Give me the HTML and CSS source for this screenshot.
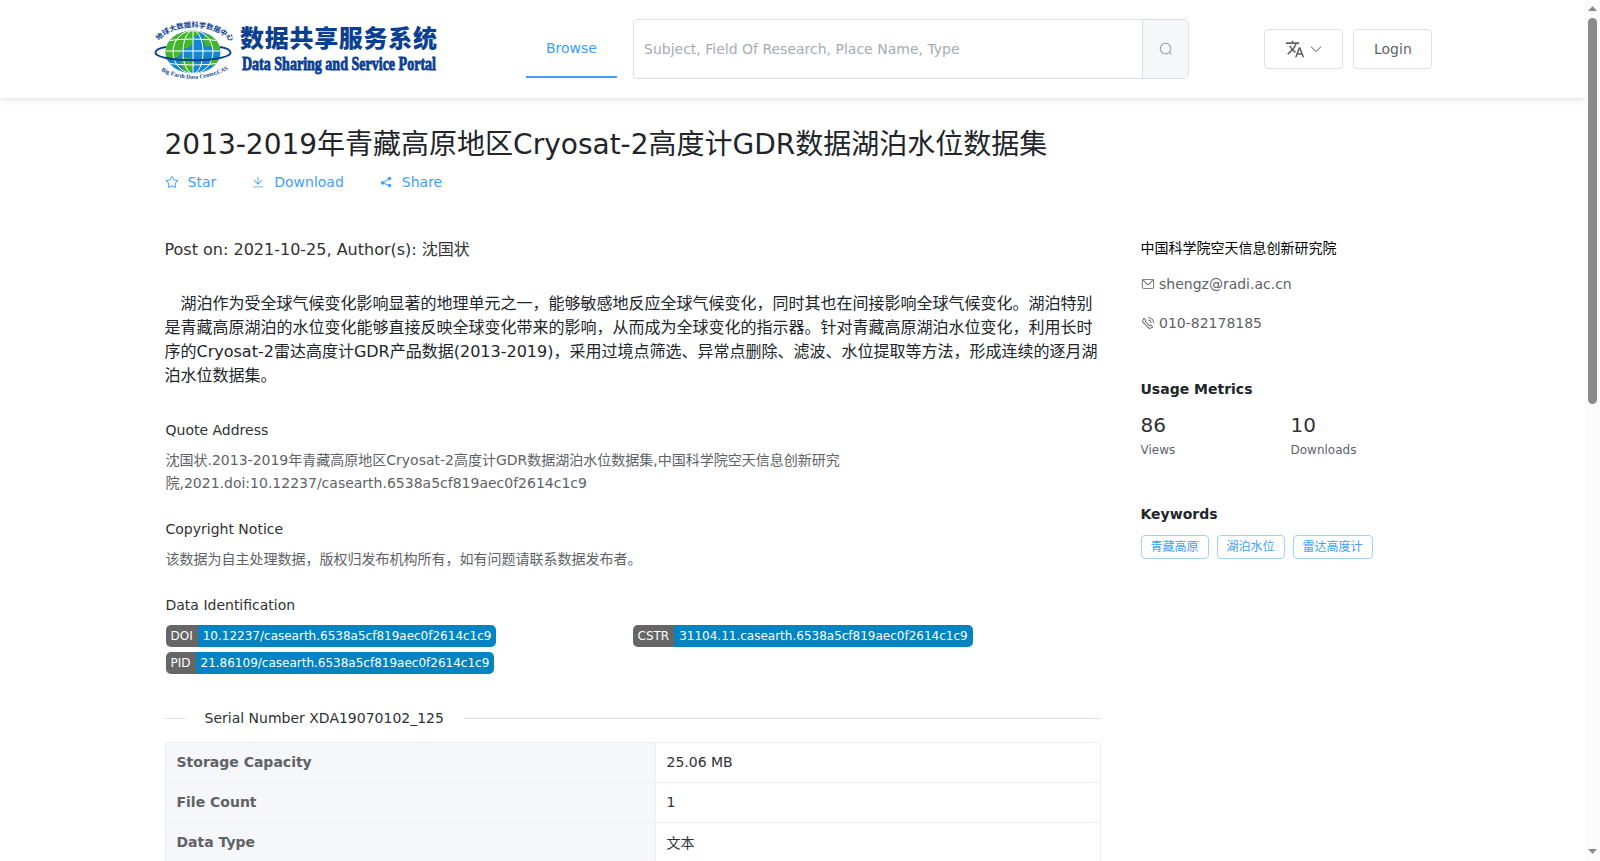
FILE: index.html
```html
<!DOCTYPE html>
<html lang="en">
<head>
  <meta charset="UTF-8">
  <title>Data Sharing and Service Portal</title>
  <meta name="viewport" content="width=device-width, initial-scale=1.0">
  <link rel="stylesheet" href="styles.css">
</head>
<body>

  <div class="page">
    <header class="header">
      <svg class="logo" viewBox="0 0 300 80" width="300" height="80">
        <defs>
          <path id="arc-top" d="M14 31 C28 13 69 12 87 33"/>
          <path id="arc-bottom" d="M16 61 Q48 77 82 60"/>
          <clipPath id="globe"><ellipse cx="48" cy="42" rx="27.5" ry="21.5"/></clipPath>
        </defs>
        <ellipse cx="48" cy="42" rx="27.5" ry="21.5" fill="#1387cf"/>
        <g clip-path="url(#globe)" fill="#45b52c">
          <path d="M20 45 L22 24 L40 19 L56 20 L52 26 L46 28 L49 33 L43 38 L37 39 L35 45 L30 49 L25 47 L22 52Z"/>
          <path d="M36 47 L45 48 L50 53 L47 60 L42 64 L36 56Z"/>
          <path d="M60 24 L70 26 L77 38 L70 41 L66 36 L61 37 L58 30Z"/>
          <path d="M66 50 L74 50 L70 56 L65 55Z"/>
        </g>
        <g clip-path="url(#globe)" fill="none" stroke="#fff" stroke-width="1">
          <ellipse cx="48" cy="42" rx="10" ry="21.5"/>
          <ellipse cx="48" cy="42" rx="20" ry="21.5"/>
          <path d="M48 20V64M20 31Q48 27 76 31M19 41H77M20 53Q48 57 76 53"/>
        </g>
        <path d="M21 37 C9 39 5 45 21 48 C37 51 60 51 75 48 C91 45 87 39 75 37" fill="none" stroke="#0b3f91" stroke-width="1.8"/>
        <text class="logo-arc"><textPath href="#arc-top">地球大数据科学数据中心</textPath></text>
        <text class="logo-arc-en"><textPath href="#arc-bottom">Big Earth Data Center,CAS</textPath></text>
        <text class="logo-cn" x="95" y="37" textLength="197">数据共享服务系统</text>
        <text class="logo-en" transform="scale(.75 1)" x="129.3" y="60.5" textLength="258.7" lengthAdjust="spacingAndGlyphs">Data Sharing and Service Portal</text>
      </svg>

      <a class="nav-item">Browse</a>

      <div class="search">
        <div class="search-input">Subject, Field Of Research, Place Name, Type</div>
        <div class="search-btn">
          <svg class="icon" viewBox="0 0 1024 1024"><path d="m795.904 750.72 124.992 124.928a32 32 0 0 1-45.248 45.248L750.656 795.904a416 416 0 1 1 45.248-45.248zM480 832a352 352 0 1 0 0-704 352 352 0 0 0 0 704z"/></svg>
        </div>
      </div>

      <div class="actions">
        <div class="btn">
          <svg class="icon-lang" viewBox="0 0 24 24"><path d="M12.87 15.07l-2.54-2.51.03-.03A17.52 17.52 0 0 0 14.07 6H17V4h-7V2H8v2H1v2h11.17C11.5 7.92 10.44 9.75 9 11.35 8.07 10.32 7.3 9.19 6.69 8h-2c.73 1.63 1.73 3.17 2.98 4.56l-5.09 5.02L4 19l5-5 3.11 3.11.76-2.04zM18.5 10h-2L12 22h2l1.12-3h4.75L21 22h2l-4.5-12zm-2.62 7l1.62-4.33L19.12 17h-3.24z"/></svg>
          <svg class="icon" viewBox="0 0 1024 1024"><path d="M831.872 340.864 512 652.672 192.128 340.864a30.592 30.592 0 0 0-42.752 0 29.12 29.12 0 0 0 0 41.6L489.664 714.24a32 32 0 0 0 44.672 0l340.288-331.712a29.12 29.12 0 0 0 0-41.728 30.592 30.592 0 0 0-42.752 0z"/></svg>
        </div>
        <div class="btn">Login</div>
      </div>
    </header>

    <div class="container">
      <h1>2013-2019年青藏高原地区Cryosat-2高度计GDR数据湖泊水位数据集</h1>
      <div class="links">
        <a><svg class="icon" viewBox="0 0 1024 1024"><path d="m512 747.84 228.16 119.936a6.4 6.4 0 0 0 9.28-6.72l-43.52-254.08 184.512-179.904a6.4 6.4 0 0 0-3.52-10.88l-255.104-37.12L517.76 147.904a6.4 6.4 0 0 0-11.52 0L392.192 379.072l-255.104 37.12a6.4 6.4 0 0 0-3.52 10.88L318.08 606.976l-43.584 254.08a6.4 6.4 0 0 0 9.28 6.72L512 747.84zM313.6 924.48a70.4 70.4 0 0 1-102.144-74.24l37.888-220.928L88.96 472.96A70.4 70.4 0 0 1 128 352.896l221.76-32.256 99.2-200.96a70.4 70.4 0 0 1 126.208 0l99.2 200.96 221.824 32.256a70.4 70.4 0 0 1 39.04 120.064L774.72 629.376l37.888 220.928a70.4 70.4 0 0 1-102.144 74.24L512 820.096l-198.4 104.32z"/></svg>Star</a>
        <a><svg class="icon" viewBox="0 0 1024 1024"><path d="M160 832h704a32 32 0 1 1 0 64H160a32 32 0 1 1 0-64zm384-253.696 236.288-236.352 45.248 45.248L508.8 704 192 387.2l45.248-45.248L480 584.704V128h64v450.304z"/></svg>Download</a>
        <a><svg class="icon" viewBox="0 0 1024 1024"><path d="m679.872 348.8-301.76 188.608a127.808 127.808 0 0 1 5.12 52.16l279.936 104.96a128 128 0 1 1-22.464 59.904l-279.872-104.96a128 128 0 1 1-16.64-166.272l301.696-188.608a128 128 0 1 1 33.92 54.272z"/></svg>Share</a>
      </div>

      <div class="columns">
        <main class="main">
          <p class="post">Post on: 2021-10-25, Author(s): 沈国状</p>
          <p class="abstract">湖泊作为受全球气候变化影响显著的地理单元之一，能够敏感地反应全球气候变化，同时其也在间接影响全球气候变化。湖泊特别是青藏高原湖泊的水位变化能够直接反映全球变化带来的影响，从而成为全球变化的指示器。针对青藏高原湖泊水位变化，利用长时序的Cryosat-2雷达高度计GDR产品数据(2013-2019)，采用过境点筛选、异常点删除、滤波、水位提取等方法，形成连续的逐月湖泊水位数据集。</p>

          <section class="info">
            <h4>Quote Address</h4>
            <p>沈国状.2013-2019年青藏高原地区Cryosat-2高度计GDR数据湖泊水位数据集,中国科学院空天信息创新研究院,2021.doi:10.12237/casearth.6538a5cf819aec0f2614c1c9</p>
          </section>
          <section class="info">
            <h4>Copyright Notice</h4>
            <p>该数据为自主处理数据，版权归发布机构所有，如有问题请联系数据发布者。</p>
          </section>
          <section class="info">
            <h4>Data Identification</h4>
            <div class="ids">
              <div class="badge"><span>DOI</span><b>10.12237/casearth.6538a5cf819aec0f2614c1c9</b></div>
              <div class="badge"><span>CSTR</span><b>31104.11.casearth.6538a5cf819aec0f2614c1c9</b></div>
              <div class="badge"><span>PID</span><b>21.86109/casearth.6538a5cf819aec0f2614c1c9</b></div>
            </div>
          </section>

          <div class="divider">Serial Number XDA19070102_125</div>
          <table>
            <tr><th>Storage Capacity</th><td>25.06 MB</td></tr>
            <tr><th>File Count</th><td>1</td></tr>
            <tr><th>Data Type</th><td>文本</td></tr>
          </table>
        </main>

        <aside class="side">
          <div class="org">中国科学院空天信息创新研究院</div>
          <div class="contact"><svg class="icon" viewBox="0 0 1024 1024"><path d="M128 224v512a64 64 0 0 0 64 64h640a64 64 0 0 0 64-64V224H128zm0-64h768a64 64 0 0 1 64 64v512a128 128 0 0 1-128 128H192A128 128 0 0 1 64 736V224a64 64 0 0 1 64-64z"/><path d="M904 224 656.512 506.88a192 192 0 0 1-289.024 0L120 224h784zm-698.944 0 210.56 240.704a128 128 0 0 0 192.704 0L818.944 224H205.056z"/></svg>shengz@radi.ac.cn</div>
          <div class="contact"><svg class="icon" viewBox="0 0 1024 1024"><path d="M79.36 432.256 591.744 944.64a32 32 0 0 0 35.2 6.784l253.44-108.544a32 32 0 0 0 9.984-52.032l-153.856-153.92a32 32 0 0 0-36.928-6.016l-69.888 34.944L358.08 394.24l35.008-69.888a32 32 0 0 0-5.952-36.928L233.152 133.568a32 32 0 0 0-52.032 10.048L72.512 397.056a32 32 0 0 0 6.784 35.2zm60.48-29.952 81.536-190.08L325.568 316.48l-24.64 49.216-20.608 41.216 32.576 32.64 271.552 271.552 32.64 32.64 41.216-20.672 49.28-24.576 104.192 104.128-190.08 81.472L139.84 402.304zM512 320v-64a256 256 0 0 1 256 256h-64a192 192 0 0 0-192-192zm0-192V64a448 448 0 0 1 448 448h-64a384 384 0 0 0-384-384z"/></svg>010-82178185</div>

          <h3>Usage Metrics</h3>
          <div class="metrics">
            <div><strong>86</strong><span>Views</span></div>
            <div><strong>10</strong><span>Downloads</span></div>
          </div>

          <h3>Keywords</h3>
          <div class="tags">
            <span>青藏高原</span>
            <span>湖泊水位</span>
            <span>雷达高度计</span>
          </div>
        </aside>
      </div>
    </div>
  </div>

  <div class="scrollbar">
    <svg viewBox="0 0 9 5" width="9" height="5"><path d="M0 5L4.5 0L9 5Z"/></svg>
    <div class="thumb"></div>
    <svg viewBox="0 0 9 5" width="9" height="5"><path d="M0 0L4.5 5L9 0Z"/></svg>
  </div>

</body>
</html>
```
FILE: styles.css
```css
* {
  box-sizing: border-box;
}

body {
  margin: 0;
  height: 861px;
  overflow: hidden;
  display: flex;
  background: #fff;
  font-family: "DejaVu Sans", "Noto Sans CJK SC", sans-serif;
  font-size: 14px;
  color: #303133;
}

h1, h3, h4, p {
  margin: 0;
}

.page {
  flex: 1;
  height: 861px;
  overflow: hidden;
}

.icon {
  width: 14px;
  height: 14px;
  fill: currentColor;
  flex: none;
}

/* header */
.header {
  height: 98px;
  display: flex;
  align-items: flex-start;
  padding-left: 145px;
  box-shadow: 0 2px 6px rgba(0,0,0,0.12);
}

.logo {
  margin-top: 10px;
  flex: none;
  overflow: visible;
}

.logo-arc,
.logo-arc-en,
.logo-cn,
.logo-en {
  fill: #0b3f91;
}

.logo-arc {
  font: 700 7.2px "Noto Sans CJK SC", sans-serif;
}

.logo-arc-en {
  font: 700 5.9px "Liberation Serif", serif;
}

.logo-cn {
  font: 900 24px "Noto Sans CJK SC", sans-serif;
}

.logo-en {
  font: 700 19px "Liberation Serif", serif;
  stroke: #0b3f91;
  stroke-width: 0.9px;
}

.nav-item {
  width: 91px;
  height: 60px;
  margin: 18px 0 0 81px;
  line-height: 60px;
  text-align: center;
  color: #409eff;
  border-bottom: 2px solid #409eff;
}

.search {
  display: flex;
  width: 556px;
  height: 60px;
  margin: 19px 0 0 16px;
  border: 1px solid #dcdfe6;
  border-radius: 4px;
}

.search-input {
  flex: 1;
  padding-left: 10px;
  line-height: 58px;
  color: #a8abb2;
}

.search-btn {
  width: 46px;
  display: flex;
  align-items: center;
  justify-content: center;
  background: #f5f7fa;
  border-left: 1px solid #dcdfe6;
  color: #909399;
}

.actions {
  display: flex;
  gap: 10px;
  margin: 29px 0 0 75px;
}

.btn {
  height: 40px;
  min-width: 78px;
  padding: 0 19px 0 20px;
  display: flex;
  align-items: center;
  justify-content: center;
  gap: 4px;
  border: 1px solid #dcdfe6;
  border-radius: 4px;
  color: #606266;
}

.icon-lang {
  width: 20px;
  height: 20px;
  fill: currentColor;
}

/* content */
.container {
  padding: 28px 0 0 164.5px;
}

h1 {
  font-size: 28px;
  font-weight: 400;
  line-height: 38px;
  color: #212529;
}

.links {
  display: flex;
  gap: 35px;
  margin-top: 8px;
}

.links a {
  display: flex;
  align-items: center;
  gap: 9px;
  line-height: 20px;
  color: #409eff;
}

.columns {
  display: flex;
  gap: 40px;
  margin-top: 45px;
}

.main {
  width: 936px;
  padding-top: 1px;
}

.post {
  font-size: 16px;
  line-height: 24px;
}

.abstract {
  margin: 30px 0 32px;
  font-size: 16px;
  line-height: 24px;
  text-indent: 16px;
  color: #212529;
}

.info {
  padding-left: 1px;
  margin-bottom: 24px;
}

.info h4 {
  font-size: 14px;
  font-weight: 400;
  line-height: 20px;
  margin-bottom: 9px;
}

.info p {
  width: 690px;
  line-height: 23px;
  color: #606266;
}

.ids {
  display: grid;
  grid-template-columns: 467px 1fr;
  row-gap: 5px;
  margin-top: 10px;
}

.badge {
  display: flex;
  width: max-content;
  font-size: 12px;
  line-height: 22px;
  border-radius: 5px;
  overflow: hidden;
  color: #fff;
}

.badge span {
  padding: 0 5px;
  background: #666;
}

.badge b {
  padding: 0 5px;
  font-weight: 400;
  background: #0384c2;
}

.divider {
  display: flex;
  align-items: center;
  gap: 20px;
  margin: 34px 0 14px;
  line-height: 20px;
}

.divider::before,
.divider::after {
  content: "";
  width: 20px;
  height: 1px;
  background: #dcdfe6;
}

.divider::after {
  flex: 1;
}

table {
  width: 936px;
  border-collapse: collapse;
  table-layout: fixed;
}

th, td {
  height: 40px;
  padding: 0 11px 2px;
  border: 1px solid #ebeef5;
  text-align: left;
}

th {
  width: 490px;
  background: #f5f7fa;
  color: #606266;
}

/* sidebar */
.org {
  line-height: 22px;
  color: #000;
}

.contact {
  display: flex;
  align-items: center;
  gap: 4.5px;
  line-height: 20px;
  margin: 15px 0 19px;
  color: #606266;
}

.side h3 {
  font-size: 14px;
  line-height: 20px;
  margin-top: 46px;
  color: #212529;
}

.side .metrics + h3 {
  margin-top: 44px;
}

.metrics {
  display: flex;
}

.metrics div {
  width: 150px;
}

.metrics strong {
  display: block;
  margin-top: 12px;
  font-size: 20px;
  font-weight: 400;
  line-height: 28px;
}

.metrics span {
  display: block;
  margin-top: 1px;
  font-size: 12px;
  line-height: 20px;
  color: #606266;
}

.tags {
  display: flex;
  gap: 8px;
  margin-top: 11px;
}

.tags span {
  height: 24px;
  padding: 0 9px;
  border: 1px solid #a0cfff;
  border-radius: 4px;
  font-size: 12px;
  line-height: 22px;
  color: #409eff;
}

/* scrollbar */
.scrollbar {
  width: 15px;
  height: 861px;
  padding: 6px 0 7px;
  display: flex;
  flex-direction: column;
  align-items: center;
  background: #fcfcfc;
}

.scrollbar svg {
  fill: #8b8b8b;
}

.thumb {
  width: 9px;
  height: 386px;
  margin: 7px 0 auto;
  border-radius: 5px;
  background: #8b8b8b;
}
```
